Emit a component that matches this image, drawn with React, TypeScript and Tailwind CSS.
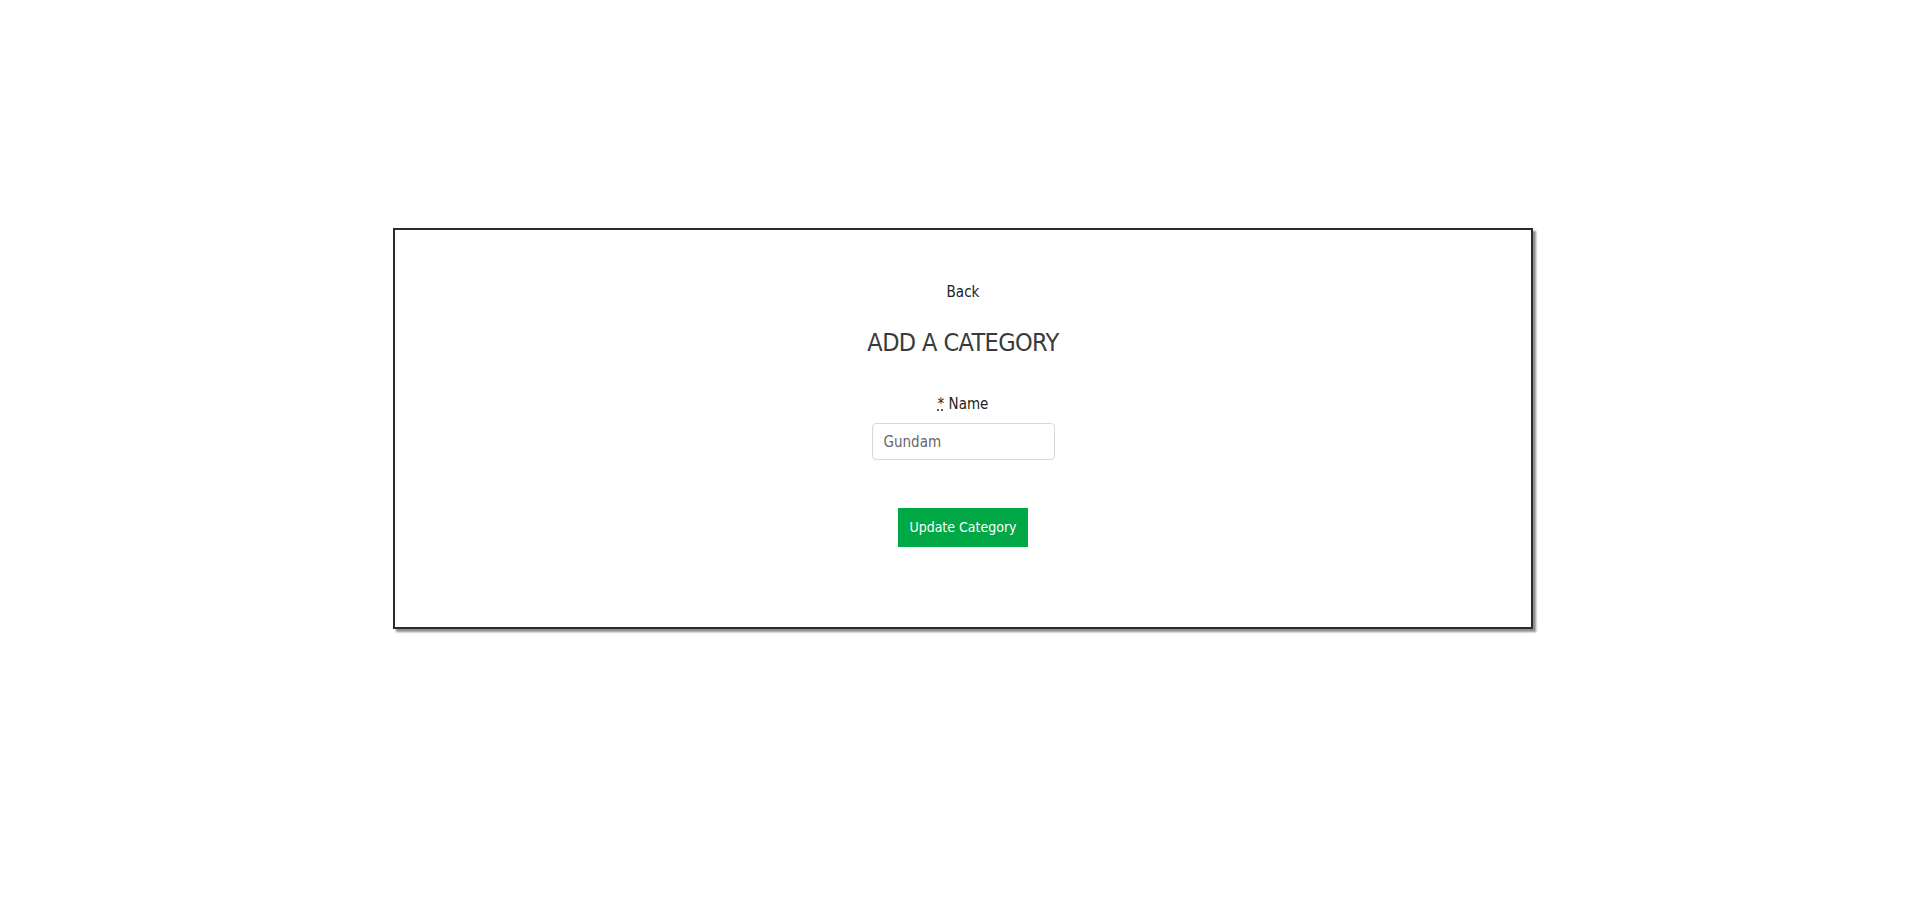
import React, { useState } from 'react';

const fontStack = "font-['Liberation_Sans_Narrow','DejaVu_Sans_Condensed',sans-serif]";

const App: React.FC = () => {
  const [name, setName] = useState('Gundam');

  return (
    <div className={`min-h-[910px] w-full bg-white pt-[228px] pl-[4px] text-[#333] ${fontStack}`}>
      <div className="mx-auto flex w-[1140px] flex-col items-center border-2 border-[#2b2b2b] pt-[50px] pb-[80px] shadow-[3px_3px_2px_rgba(0,0,0,0.45)]">
        <a href="#" className="text-[15px] leading-[24px] text-[#222]">
          Back
        </a>
        <h1 className="mt-[22px] text-[25px] font-light leading-[34px] tracking-[-0.6px] text-[#3a3a3a]">ADD A CATEGORY</h1>
        <form className="mt-[32px] flex flex-col items-center" onSubmit={(e) => e.preventDefault()}>
          <label htmlFor="name" className="text-[15px] leading-[24px] text-[#222]">
            <abbr title="required" className="underline decoration-dotted">*</abbr> Name
          </label>
          <input
            id="name"
            value={name}
            onChange={(e) => setName(e.target.value)}
            className="mt-[7px] h-[37px] w-[183px] rounded-[4px] border border-[#d4d8dc] px-[11px] text-[15px] text-[#666] outline-none"
          />
          <button
            type="submit"
            className="mt-[48px] h-[39px] w-[130px] bg-[#00a846] text-[14px] text-white"
          >
            Update Category
          </button>
        </form>
      </div>
    </div>
  );
};

export default App;
